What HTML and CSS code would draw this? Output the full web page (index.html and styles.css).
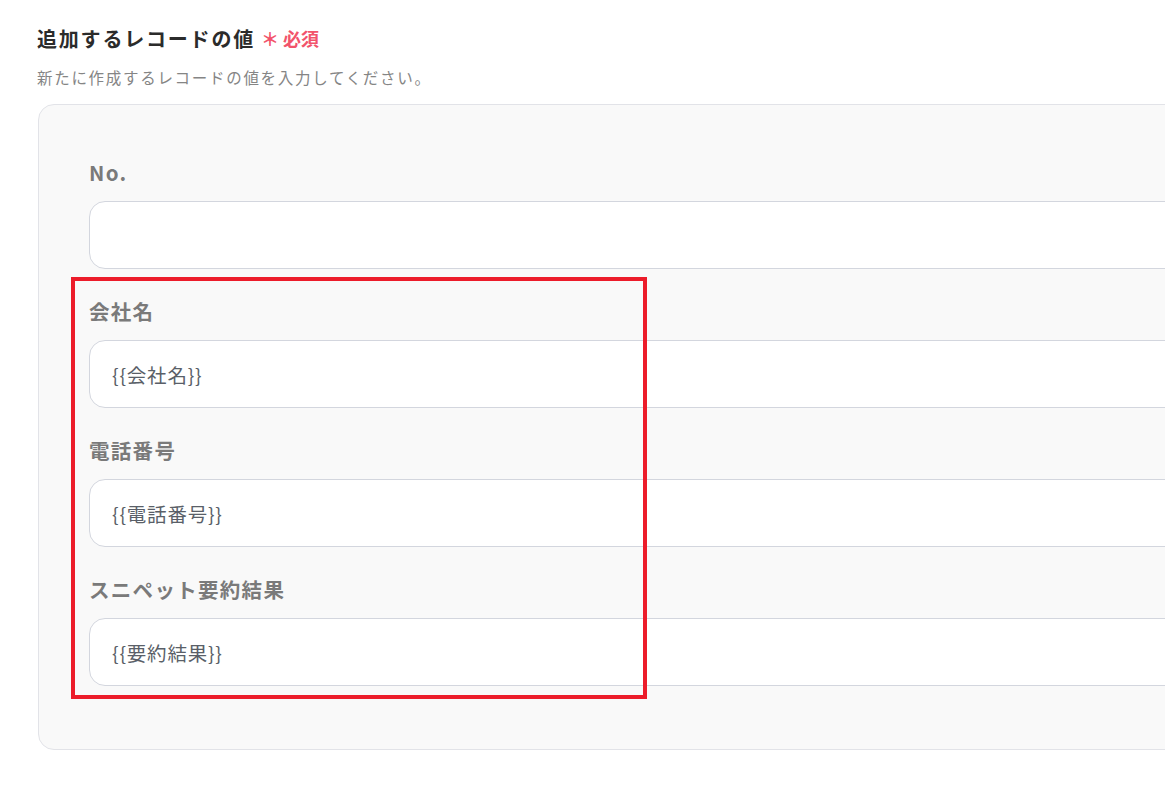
FILE: index.html
```html
<!DOCTYPE html>
<html lang="ja">
<head>
<meta charset="utf-8">
<title>追加するレコードの値</title>
<link rel="stylesheet" href="styles.css">
</head>
<body>
<div class="page">
  <div class="heading">
    <span class="title">追加するレコードの値</span>
    <span class="required"><span class="asterisk">＊</span>必須</span>
  </div>
  <p class="desc">新たに作成するレコードの値を入力してください。</p>
  <div class="panel">
    <div class="field">
      <div class="label">No.</div>
      <div class="input"></div>
    </div>
    <div class="field">
      <div class="label">会社名</div>
      <div class="input">{{会社名}}</div>
    </div>
    <div class="field">
      <div class="label">電話番号</div>
      <div class="input">{{電話番号}}</div>
    </div>
    <div class="field">
      <div class="label">スニペット要約結果</div>
      <div class="input">{{要約結果}}</div>
    </div>
    <div class="highlight"></div>
  </div>
</div>
</body>
</html>
```
FILE: styles.css
```css
html, body {
  margin: 0;
  padding: 0;
  background: #ffffff;
  overflow: hidden;
}
body {
  font-family: "Noto Sans CJK JP", "Noto Sans", sans-serif;
  width: 1165px;
  height: 788px;
}
.page {
  padding: 23px 0 0 37px;
}
.heading {
  display: flex;
  align-items: center;
  height: 30px;
}
.title {
  font-size: 20px;
  font-weight: 700;
  color: #2b2b2b;
  letter-spacing: 1.8px;
}
.required {
  margin-left: 6px;
  font-size: 18px;
  font-weight: 700;
  color: #f2536b;
  display: flex;
  align-items: center;
}
.asterisk {
  font-size: 18px;
  margin-right: 4px;
}
.desc {
  margin: 14px 0 0 0;
  font-size: 15.5px;
  line-height: 20px;
  color: #858585;
  letter-spacing: 1.7px;
}
.panel {
  position: relative;
  margin-top: 17px;
  margin-left: 1px;
  width: 1300px;
  box-sizing: border-box;
  background: #f9f9f9;
  border: 1px solid #e2e3e8;
  border-radius: 16px;
  padding: 53px 0 63px 50px;
  display: flex;
  flex-direction: column;
  gap: 28px;
}
.field {
  display: flex;
  flex-direction: column;
  gap: 15px;
}
.label {
  font-size: 20.5px;
  line-height: 28px;
  font-weight: 700;
  color: #7a7a7a;
  letter-spacing: 1.3px;
}
.input {
  height: 68px;
  box-sizing: border-box;
  background: #ffffff;
  border: 1px solid #d3d6de;
  border-radius: 16px;
  padding: 0 0 0 22px;
  display: flex;
  align-items: center;
  font-size: 19.5px;
  color: #5a5f68;
  letter-spacing: 0.8px;
}
.highlight {
  position: absolute;
  left: 32px;
  top: 172px;
  width: 576px;
  height: 422px;
  box-sizing: border-box;
  border: 4px solid #ec1c2a;
  pointer-events: none;
}
```
